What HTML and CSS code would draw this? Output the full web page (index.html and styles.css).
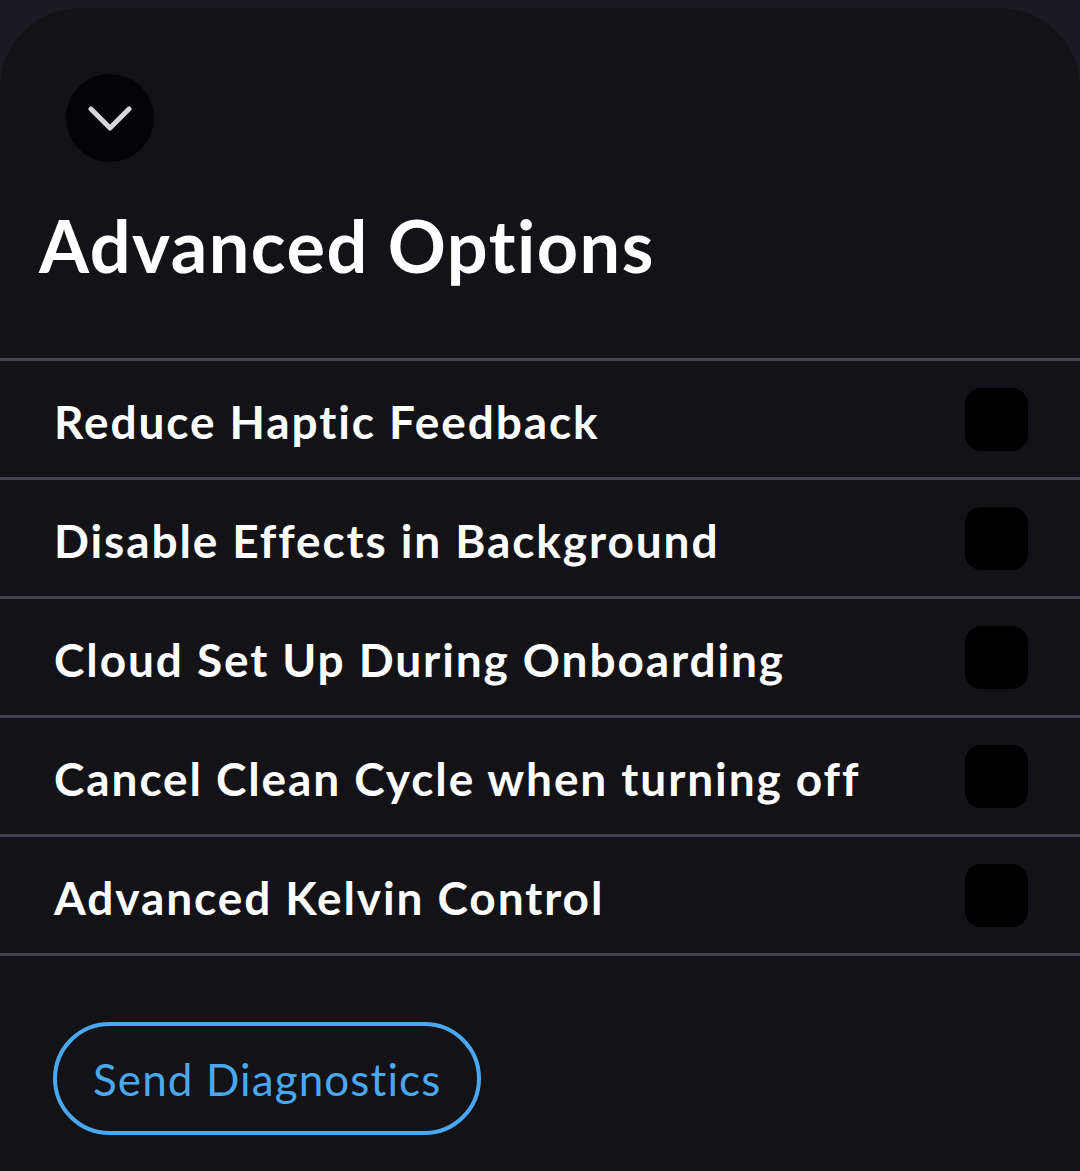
FILE: index.html
```html
<!DOCTYPE html>
<html>
<head>
<meta charset="utf-8">
<link rel="stylesheet" href="styles.css">
</head>
<body>
<div class="sheet">
  <button class="collapse" aria-label="Collapse">
    <svg width="44" height="44" viewBox="0 0 44 44"><path d="M3 11 L22 30 L41 11" fill="none" stroke="#d5d7db" stroke-width="5" stroke-linecap="round" stroke-linejoin="round"/></svg>
  </button>
  <h1 class="title">Advanced Options</h1>
  <ul class="options">
    <li class="option"><span class="label">Reduce Haptic Feedback</span><span class="check"></span></li>
    <li class="option"><span class="label">Disable Effects in Background</span><span class="check"></span></li>
    <li class="option"><span class="label">Cloud Set Up During Onboarding</span><span class="check"></span></li>
    <li class="option"><span class="label">Cancel Clean Cycle when turning off</span><span class="check"></span></li>
    <li class="option"><span class="label">Advanced Kelvin Control</span><span class="check"></span></li>
  </ul>
  <div class="actions">
    <button class="diag">Send Diagnostics</button>
  </div>
</div>
</body>
</html>
```

FILE: styles.css
```css
html, body {
  margin: 0;
  padding: 0;
  background: #1c1b21;
  height: 100%;
}
body {
  padding-top: 8px;
  box-sizing: border-box;
  font-family: "Lato", "Noto Sans", sans-serif;
  font-variant-ligatures: none;
  color: #ffffff;
}
.sheet {
  background: #121217;
  border-radius: 80px 80px 0 0;
  min-height: 1163px;
  padding-top: 66px;
  box-sizing: border-box;
}
.collapse {
  margin-left: 66px;
  width: 88px;
  height: 88px;
  border-radius: 50%;
  border: none;
  background: #040407;
  display: flex;
  align-items: center;
  justify-content: center;
  padding: 0;
}
.collapse svg {
  width: 44px;
  height: 44px;
  margin-top: 4px;
}
.title {
  margin: 38px 0 0 39px;
  font-size: 72px;
  font-weight: 700;
  line-height: 90px;
  letter-spacing: 1.5px;
}
.options {
  list-style: none;
  margin: 68px 0 0 0;
  padding: 0;
  border-top: 3px solid #45444e;
}
.option {
  height: 116px;
  border-bottom: 3px solid #45444e;
  display: flex;
  align-items: center;
  justify-content: space-between;
  padding: 0 52px 0 54px;
}
.label {
  font-size: 46px;
  font-weight: 700;
  letter-spacing: 1.9px;
  margin-top: 4px;
}
.check {
  width: 63px;
  height: 63px;
  border-radius: 16px;
  background: #000000;
}
.actions {
  padding: 66px 0 0 53px;
}
.diag {
  height: 113px;
  padding: 0 36px;
  border: 4px solid #4aa8f0;
  border-radius: 60px;
  background: transparent;
  color: #4aa8f0;
  font-family: "Lato", "Noto Sans", sans-serif;
  font-variant-ligatures: none;
  font-size: 44px;
  font-weight: 400;
  letter-spacing: 1.1px;
}
```
